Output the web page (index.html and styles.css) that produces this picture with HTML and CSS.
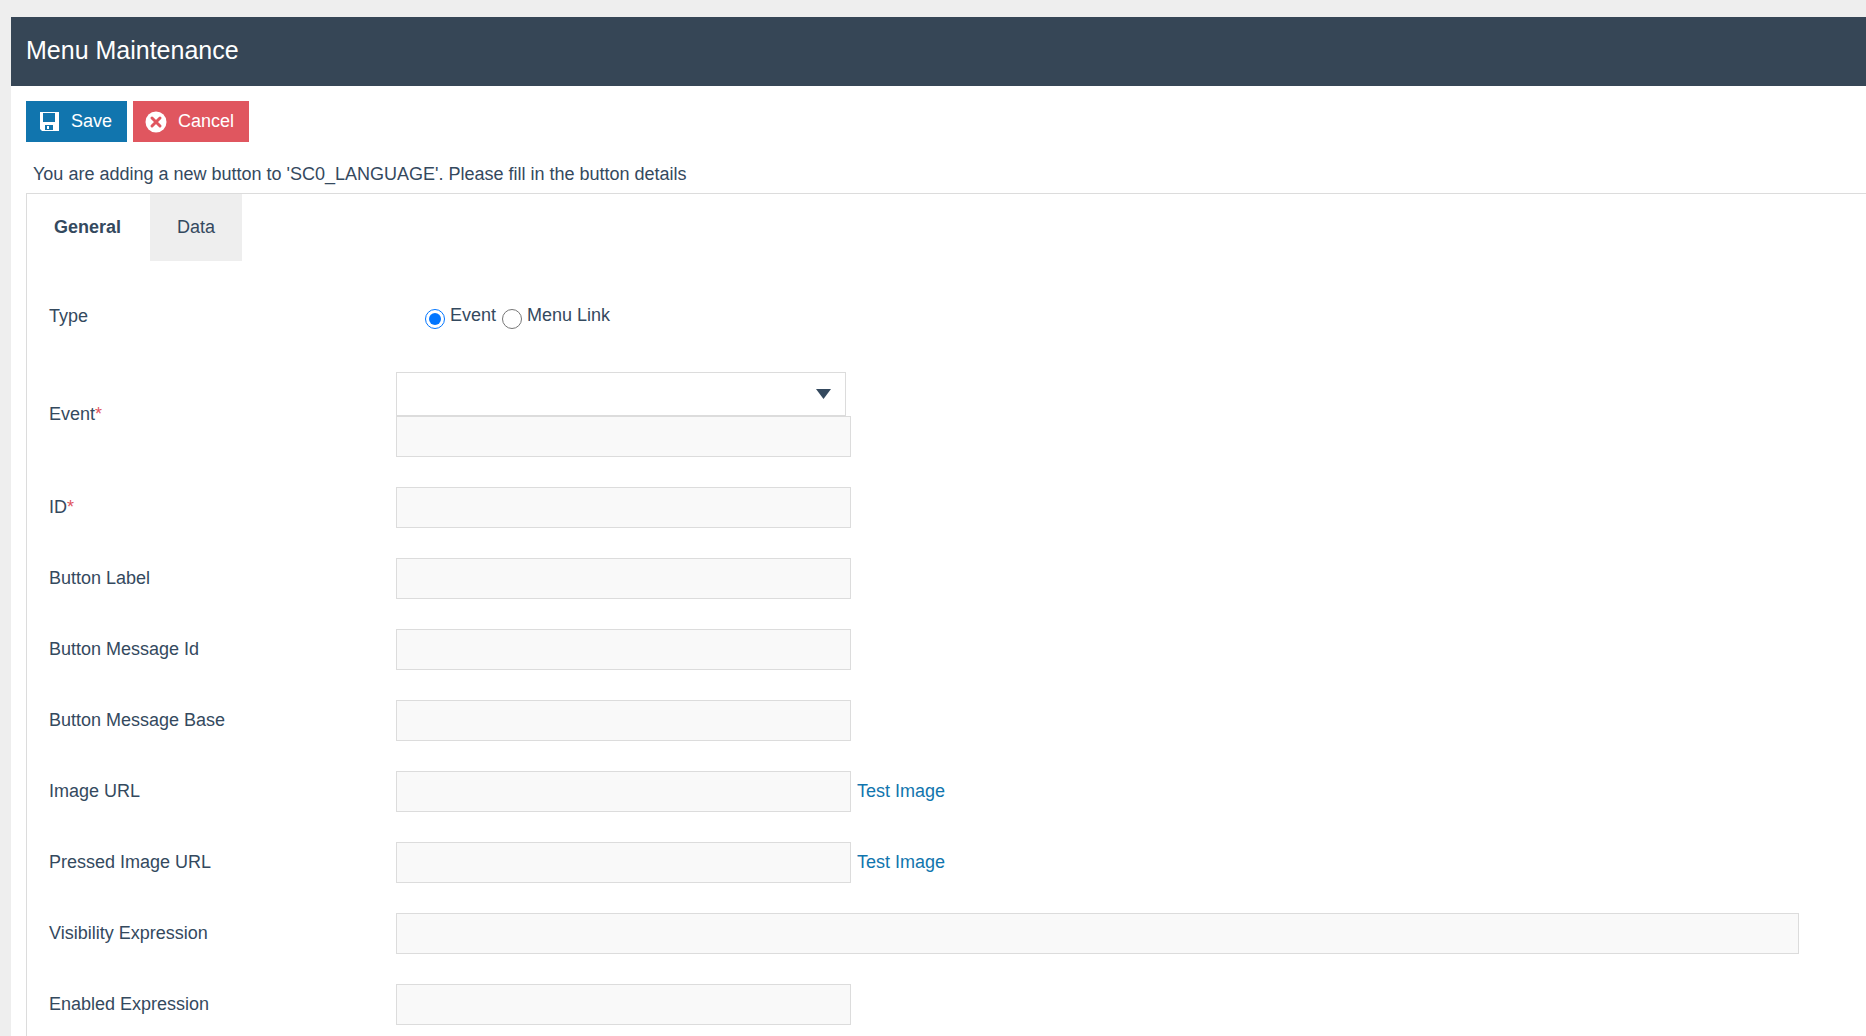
FILE: index.html
```html
<!DOCTYPE html>
<html lang="en">
<head>
  <meta charset="UTF-8">
  <meta name="viewport" content="width=device-width, initial-scale=1.0">
  <title>Menu Maintenance</title>
  <link rel="stylesheet" href="styles.css">
</head>
<body>
  <form class="page">
    <header class="header">
      <h1>Menu Maintenance</h1>
    </header>

    <div class="toolbar">
      <button type="submit" class="btn save">
        <svg class="icon" viewBox="0 0 22 22" aria-hidden="true">
          <path fill="#fff" fill-rule="evenodd" d="M2 1h19v19H4l-2-2zM5 2v9h12V2zM7 14v5h8v-5z"/>
          <path fill="#fff" d="M9 15h2v3H9z"/>
        </svg>
        <span>Save</span>
      </button>
      <button type="button" class="btn cancel">
        <svg class="icon" viewBox="0 0 22 22" aria-hidden="true">
          <circle cx="11" cy="11" r="10.5" fill="#fff"/>
          <path stroke="#e0565f" stroke-width="3" stroke-linecap="round" d="M7 7l8 8M15 7l-8 8"/>
        </svg>
        <span>Cancel</span>
      </button>
    </div>

    <p class="message">You are adding a new button to 'SC0_LANGUAGE'. Please fill in the button details</p>

    <main class="panel">
      <nav class="tabs">
        <button type="button" class="tab active">General</button>
        <button type="button" class="tab">Data</button>
      </nav>

      <div class="fields">
        <div class="row type-row" role="radiogroup" aria-labelledby="type-label">
          <span class="label" id="type-label">Type</span>
          <div class="radios">
            <input type="radio" name="type" id="type-event" checked>
            <label for="type-event">Event</label>
            <input type="radio" name="type" id="type-link">
            <label for="type-link">Menu Link</label>
          </div>
        </div>
        <div class="row">
          <label class="label" for="event">Event<span class="required">*</span></label>
          <div class="stack">
            <select id="event" class="select"><option></option></select>
            <input type="text" class="text" aria-label="Event name">
          </div>
        </div>
        <div class="row">
          <label class="label" for="id">ID<span class="required">*</span></label>
          <input type="text" class="text" id="id">
        </div>
        <div class="row">
          <label class="label" for="button-label">Button Label</label>
          <input type="text" class="text" id="button-label">
        </div>
        <div class="row">
          <label class="label" for="message-id">Button Message Id</label>
          <input type="text" class="text" id="message-id">
        </div>
        <div class="row">
          <label class="label" for="message-base">Button Message Base</label>
          <input type="text" class="text" id="message-base">
        </div>
        <div class="row">
          <label class="label" for="image-url">Image URL</label>
          <input type="text" class="text" id="image-url">
          <a href="#" class="test">Test Image</a>
        </div>
        <div class="row">
          <label class="label" for="pressed-url">Pressed Image URL</label>
          <input type="text" class="text" id="pressed-url">
          <a href="#" class="test">Test Image</a>
        </div>
        <div class="row">
          <label class="label" for="visibility">Visibility Expression</label>
          <input type="text" class="text wide" id="visibility">
        </div>
        <div class="row">
          <label class="label" for="enabled">Enabled Expression</label>
          <input type="text" class="text" id="enabled">
        </div>
      </div>
    </main>
  </form>
</body>
</html>
```

FILE: styles.css
```css
* {
  box-sizing: border-box;
}

body {
  margin: 0;
  padding: 17px 0 0 11px;
  background: #eee;
  color: #34495e;
  font-family: Arial, "Liberation Sans", sans-serif;
  font-size: 18px;
  line-height: 20px;
}

button, input, select {
  margin: 0;
  font: inherit;
  color: inherit;
}

.page {
  display: flex;
  flex-direction: column;
  min-height: calc(100vh - 17px);
  background: #fff;
}

.header {
  padding: 18px 15px 21px;
  background: #364656;
}

.header h1 {
  margin: 0;
  color: #fff;
  font-size: 25px;
  font-weight: normal;
  line-height: 30px;
}

.toolbar {
  display: flex;
  gap: 6px;
  padding: 15px 15px 0;
}

.btn {
  display: flex;
  align-items: center;
  gap: 11px;
  height: 41px;
  padding: 0 15px 0 12px;
  border: none;
  color: #fff;
}

.btn span {
  padding-bottom: 2px;
}

.save {
  background: #1175ae;
}

.cancel {
  background: #e0565f;
}

.icon {
  width: 22px;
  height: 22px;
}

.message {
  margin: 22px 0 9px 22px;
}

.panel {
  flex: 1;
  margin-left: 15px;
  border-top: 1px solid #dcdcdc;
  border-left: 1px solid #dcdcdc;
}

.tabs {
  display: flex;
}

.tab {
  height: 67px;
  padding: 0 27px 2px;
  border: none;
  background: #eee;
}

.tab.active {
  padding-right: 29px;
  background: #fff;
  font-weight: bold;
}

.fields {
  padding: 16px 67px 0 22px;
}

.row {
  display: flex;
  align-items: center;
  padding: 15px 0;
}

.row:last-child {
  padding-bottom: 0;
}

.type-row {
  height: 80px;
}

.label {
  flex: 0 0 347px;
  padding-bottom: 2px;
}

.required {
  color: #e0565f;
}

.radios {
  display: flex;
  align-items: center;
  padding-left: 29px;
}

.radios input {
  width: 20px;
  height: 20px;
  margin-top: 3px;
}

.radios label {
  padding: 0 6px 5px 5px;
}

.stack {
  display: flex;
  flex-direction: column;
}

.text {
  width: 455px;
  height: 41px;
  padding: 0 10px;
  border: 1px solid #dcdcdc;
  background: #f9f9f9;
}

.wide {
  flex: 1;
}

.select {
  appearance: none;
  width: 450px;
  height: 44px;
  padding: 0 40px 0 10px;
  border: 1px solid #dcdcdc;
  border-radius: 0;
  background: #fff url("data:image/svg+xml,%3Csvg xmlns='http://www.w3.org/2000/svg' width='15' height='10'%3E%3Cpath d='M0 0h15L7.500 10z' fill='%2334495e'/%3E%3C/svg%3E") no-repeat right 14px center;
}

.test {
  padding: 0 0 2px 6px;
  color: #1175ae;
  text-decoration: none;
}
```
